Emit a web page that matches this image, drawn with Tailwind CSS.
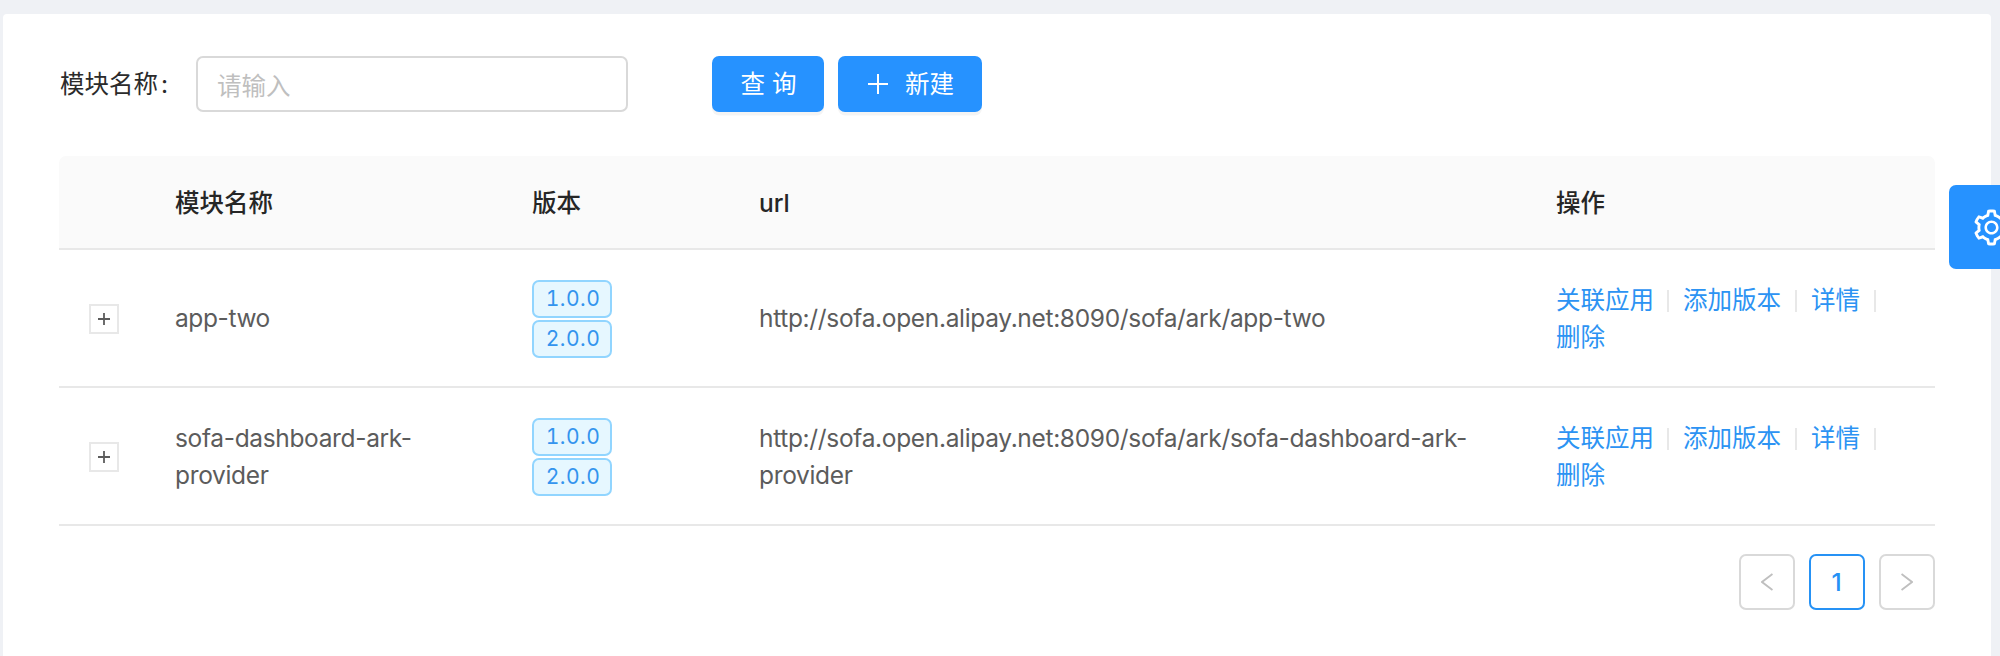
<!DOCTYPE html>
<html lang="zh-CN">
<head>
<meta charset="utf-8">
<title>模块管理</title>
<script src="https://cdn.jsdelivr.net/npm/@tailwindcss/browser@4"></script>
</head>
<body class="h-[656px] overflow-hidden bg-[#eff1f5] pt-[14px] font-['Inter','Noto_Sans_CJK_SC',sans-serif] text-[24.5px] leading-[36.75px] text-[#5c5c5c]">
<main class="mr-[9px] ml-[3px] h-[642px] rounded-t-[4px] bg-white pt-[42px] pr-[56px] pl-[56px]">
  <form class="flex h-[56px] items-center">
    <label class="w-[137px] pt-px pl-px whitespace-nowrap text-[#2b2b2b]">模块名称<span class="ml-[3px]">:</span></label>
    <input class="h-[56px] w-[432px] rounded-[7px] border-2 border-[#d9d9d9] px-[19px] pt-[4px] placeholder:text-[#bfbfbf]" placeholder="请输入">
    <button type="button" class="ml-[84px] h-[56px] w-[112px] rounded-[7px] bg-[#2692ff] pl-px text-white shadow-[0_3.5px_0_rgba(0,0,0,0.045)]">查 询</button>
    <button type="button" class="ml-[14px] flex h-[56px] w-[144px] items-center rounded-[7px] bg-[#2692ff] pl-[30px] text-white shadow-[0_3.5px_0_rgba(0,0,0,0.045)]">
      <svg class="size-5" viewBox="0 0 20 20" fill="none" stroke="currentColor" stroke-width="2"><path d="M10 0V20M0 10H20"/></svg>
      <span class="ml-[17px]">新建</span>
    </button>
  </form>

  <section class="mt-[44px]">
    <div class="grid h-[94px] grid-cols-[88px_357px_227px_797px_407px] items-center rounded-t-[7px] border-b-2 border-[#e8e8e8] bg-[#fafafa] pt-[2px] font-medium text-[#262626]">
      <div></div>
      <div class="px-7">模块名称</div>
      <div class="px-7">版本</div>
      <div class="px-7">url</div>
      <div class="pl-[28px]">操作</div>
    </div>

    <div class="grid h-[138px] grid-cols-[88px_357px_227px_797px_407px] items-center border-b-2 border-[#e8e8e8] pt-[2px]">
      <div class="pl-[30px]"><div class="flex h-[30px] w-[30px] items-center justify-center border-2 border-[#e8e8e8]"><svg class="size-3" viewBox="0 0 12 12" fill="none" stroke="currentColor" stroke-width="1.8"><path d="M6 0V12M0 6H12"/></svg></div></div>
      <div class="px-7 pb-[2px] tracking-[-0.4px]">app-two</div>
      <div class="flex flex-col gap-[2px] px-7 text-[21px] tracking-[0.5px] tabular-nums">
        <span class="flex h-[38px] w-[80px] items-center justify-center rounded-[7px] border-2 border-[#91d5ff] bg-[#e6f7ff] pl-[2px] text-[#3394ee]">1.0.0</span>
        <span class="flex h-[38px] w-[80px] items-center justify-center rounded-[7px] border-2 border-[#91d5ff] bg-[#e6f7ff] pl-[2px] text-[#3394ee]">2.0.0</span>
      </div>
      <div class="px-7 pb-[2px] tracking-[-0.33px]">http://sofa.open.alipay.net:8090/sofa/ark/app-two</div>
      <div class="pl-[28px] text-[#2c93f3]">
        <div class="flex items-center"><a>关联应用</a><i class="mr-[14px] ml-[13px] h-[22px] w-[2px] bg-[#e8e8e8]"></i><a>添加版本</a><i class="mx-[14px] h-[22px] w-[2px] bg-[#e8e8e8]"></i><a>详情</a><i class="mx-[14px] h-[22px] w-[2px] bg-[#e8e8e8]"></i></div>
        <div><a>删除</a></div>
      </div>
    </div>

    <div class="grid h-[138px] grid-cols-[88px_357px_227px_797px_407px] items-center border-b-2 border-[#e8e8e8] pt-[2px]">
      <div class="pl-[30px]"><div class="flex h-[30px] w-[30px] items-center justify-center border-2 border-[#e8e8e8]"><svg class="size-3" viewBox="0 0 12 12" fill="none" stroke="currentColor" stroke-width="1.8"><path d="M6 0V12M0 6H12"/></svg></div></div>
      <div class="px-7 tracking-[-0.34px]">sofa-dashboard-ark-<br>provider</div>
      <div class="flex flex-col gap-[2px] px-7 text-[21px] tracking-[0.5px] tabular-nums">
        <span class="flex h-[38px] w-[80px] items-center justify-center rounded-[7px] border-2 border-[#91d5ff] bg-[#e6f7ff] pl-[2px] text-[#3394ee]">1.0.0</span>
        <span class="flex h-[38px] w-[80px] items-center justify-center rounded-[7px] border-2 border-[#91d5ff] bg-[#e6f7ff] pl-[2px] text-[#3394ee]">2.0.0</span>
      </div>
      <div class="px-7 tracking-[-0.33px]">http://sofa.open.alipay.net:8090/sofa/ark/sofa-dashboard-ark-<br>provider</div>
      <div class="pl-[28px] text-[#2c93f3]">
        <div class="flex items-center"><a>关联应用</a><i class="mr-[14px] ml-[13px] h-[22px] w-[2px] bg-[#e8e8e8]"></i><a>添加版本</a><i class="mx-[14px] h-[22px] w-[2px] bg-[#e8e8e8]"></i><a>详情</a><i class="mx-[14px] h-[22px] w-[2px] bg-[#e8e8e8]"></i></div>
        <div><a>删除</a></div>
      </div>
    </div>
  </section>

  <nav class="mt-[28px] flex justify-end gap-[14px]">
    <button class="flex size-[56px] items-center justify-center rounded-[7px] border-2 border-[#d9d9d9] text-[#bfbfbf]"><svg class="h-[18px] w-[12px]" viewBox="0 0 12 18" fill="none" stroke="currentColor" stroke-width="1.9"><path d="M11.5 1L1 9L11.5 17"/></svg></button>
    <button class="flex size-[56px] items-center justify-center rounded-[7px] border-2 border-[#2692f5] pr-px font-medium text-[#2692f5]">1</button>
    <button class="flex size-[56px] items-center justify-center rounded-[7px] border-2 border-[#d9d9d9] text-[#bfbfbf]"><svg class="h-[18px] w-[12px]" viewBox="0 0 12 18" fill="none" stroke="currentColor" stroke-width="1.9"><path d="M0.5 1L11 9L0.5 17"/></svg></button>
  </nav>
</main>

<div class="fixed top-[185px] left-[1949px] flex h-[84px] w-[84px] items-center justify-center rounded-l-[7px] bg-[#2692ff] text-white">
  <svg class="size-[41px]" viewBox="0 0 1024 1024" fill="currentColor"><path d="M924.8 625.7l-65.5-56c3.1-19 4.7-38.4 4.7-57.8s-1.6-38.8-4.7-57.8l65.5-56a32.03 32.03 0 0 0 9.3-35.2l-.9-2.6a443.74 443.74 0 0 0-79.7-137.9l-1.8-2.1a32.12 32.12 0 0 0-35.1-9.5l-81.3 28.9c-30-24.6-63.5-44-99.7-57.6l-15.7-85a32.05 32.05 0 0 0-25.8-25.7l-2.7-.5c-52.1-9.4-106.9-9.4-159 0l-2.7.5a32.05 32.05 0 0 0-25.8 25.7l-15.8 85.4a351.86 351.86 0 0 0-99 57.4l-81.9-29.1a32 32 0 0 0-35.1 9.5l-1.8 2.1a446.02 446.02 0 0 0-79.7 137.9l-.9 2.6c-4.5 12.5-.8 26.5 9.3 35.2l66.3 56.6c-3.1 18.8-4.6 38-4.6 57.1 0 19.2 1.5 38.4 4.6 57.1L99 625.5a32.03 32.03 0 0 0-9.3 35.2l.9 2.6c18.1 50.4 44.9 96.9 79.7 137.9l1.8 2.1a32.12 32.12 0 0 0 35.1 9.5l81.9-29.1c29.8 24.5 63.1 43.9 99 57.4l15.8 85.4a32.05 32.05 0 0 0 25.8 25.7l2.7.5a449.4 449.4 0 0 0 159 0l2.7-.5a32.05 32.05 0 0 0 25.8-25.7l15.7-85a350 350 0 0 0 99.7-57.6l81.3 28.9a32 32 0 0 0 35.1-9.5l1.8-2.1c34.8-41.1 61.6-87.5 79.7-137.9l.9-2.6c4.5-12.3.8-26.3-9.3-35zM788.3 465.9c2.5 15.1 3.8 30.6 3.8 46.1s-1.3 31-3.8 46.1l-6.6 40.1 74.7 63.9a370.03 370.03 0 0 1-42.6 73.6L721 702.8l-31.4 25.8c-23.9 19.6-50.5 35-79.3 45.8l-38.1 14.3-17.9 97a377.5 377.5 0 0 1-85 0l-17.9-97.2-37.8-14.5c-28.5-10.8-55-26.2-78.7-45.7l-31.4-25.9-93.4 33.2c-17-22.9-31.2-47.6-42.6-73.6l75.5-64.5-6.5-40c-2.4-14.9-3.7-30.3-3.7-45.5 0-15.3 1.2-30.6 3.7-45.5l6.5-40-75.5-64.5c11.3-26.1 25.6-50.7 42.6-73.6l93.4 33.2 31.4-25.9c23.7-19.5 50.2-34.9 78.7-45.7l37.9-14.3 17.9-97.2c28.1-3.2 56.8-3.2 85 0l17.9 97 38.1 14.3c28.7 10.8 55.4 26.2 79.3 45.8l31.4 25.8 92.8-32.9c17 22.9 31.2 47.6 42.6 73.6L781.8 426l6.5 39.9zM512 336c-97.2 0-176 78.8-176 176s78.8 176 176 176 176-78.8 176-176-78.8-176-176-176zm79.2 255.2A111.6 111.6 0 0 1 512 624c-29.9 0-58-11.7-79.2-32.8A111.6 111.6 0 0 1 400 512c0-29.9 11.7-58 32.8-79.2C454 411.6 482.1 400 512 400c29.9 0 58 11.6 79.2 32.8A111.6 111.6 0 0 1 624 512c0 29.9-11.7 58-32.8 79.2z"/></svg>
</div>
</body>
</html>
